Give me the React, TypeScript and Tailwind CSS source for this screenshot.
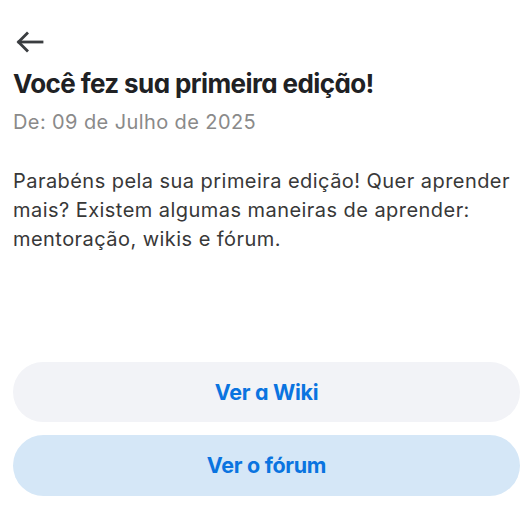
const ArrowLeft = () => (
  <svg width="30" height="22" viewBox="0 0 30 22" fill="none" stroke="#3a3d40" strokeWidth="2.8" strokeLinecap="square">
    <path d="M4 11h23" />
    <path d="M12 2.5L3.5 11l8.5 8.5" strokeLinejoin="miter" />
  </svg>
);

export default function App() {
  return (
    <div className="flex h-[509px] w-[525px] flex-col bg-white pr-[5px] pl-[13px] font-['Inter','Noto_Sans',sans-serif]">
      <button className="mt-[31px] ml-[2px] flex h-[22px] w-[30px] items-center">
        <ArrowLeft />
      </button>
      <h1 className="mt-[14px] text-[26px] leading-[34px] font-bold tracking-[-0.6px] text-[#202124] [font-feature-settings:'cv11']">
        Você fez sua primeira edição!
      </h1>
      <p className="mt-[8px] text-[20px] leading-[26px] tracking-[0.4px] text-[#8a8a8a]">De: 09 de Julho de 2025</p>
      <p className="mt-[32px] pr-[4px] text-[20px] leading-[29px] tracking-[0.45px] text-[#383838]">
        Parabéns pela sua primeira edição! Quer aprender mais? Existem algumas maneiras de aprender:
        mentoração, wikis e fórum.
      </p>
      <div className="mt-auto mb-[13px] flex flex-col gap-[13px]">
        <button className="h-[60px] w-full rounded-full bg-[#f2f3f7] text-[21.5px] font-bold tracking-[-0.3px] text-[#0a74e0] [font-feature-settings:'cv11']">
          Ver a Wiki
        </button>
        <button className="h-[61px] w-full rounded-full bg-[#d5e7f7] text-[21.5px] font-bold tracking-[-0.3px] text-[#0a74e0] [font-feature-settings:'cv11']">
          Ver o fórum
        </button>
      </div>
    </div>
  );
}
